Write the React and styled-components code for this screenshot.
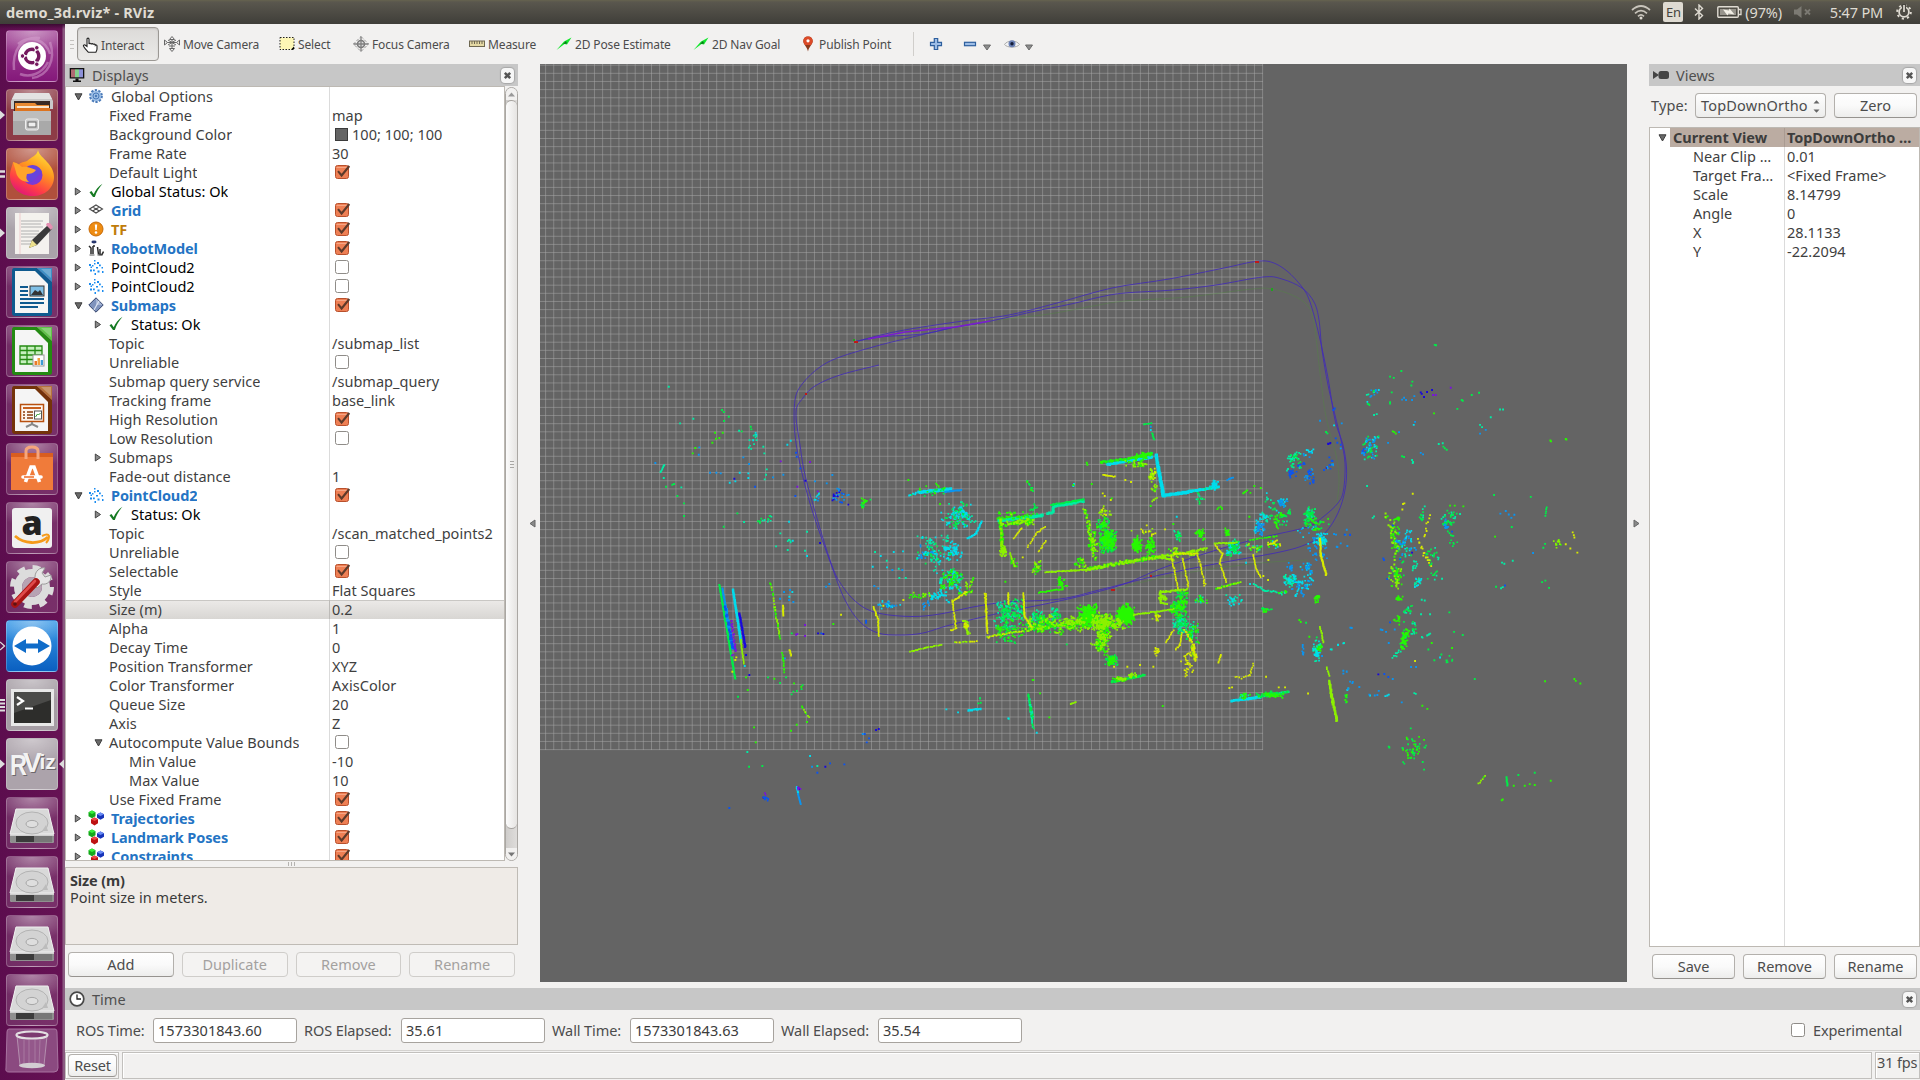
import React from "react";
import styled, { createGlobalStyle, css } from "styled-components";

const Global = createGlobalStyle`
  * { box-sizing: border-box; }
  body { margin: 0; overflow: hidden; background: #f2f1f0; }
  body, button, input { font-family: "Noto Sans", "Open Sans", sans-serif; font-size: 14.5px; letter-spacing: 0.03px; color: #4c4c4c; }
`;

/* ---------- frame ---------- */
const Desktop = styled.div`
  width: 1920px; height: 1080px; display: flex; flex-direction: column; overflow: hidden;
  white-space: nowrap; line-height: 19px;
`;
const TopBar = styled.header`
  height: 24px; flex: none; display: flex; align-items: center; justify-content: space-between;
  padding: 0 8px 0 6px; color: #dfdbd2;
  background: linear-gradient(#66634f 0, #5a574e 2px, #3f3e39 100%);
`;
const WindowTitle = styled.span` font-weight: 700; font-size: 14.5px; letter-spacing: 0.15px; `;
const Indicators = styled.div` display: flex; align-items: center; font-size: 14.5px; letter-spacing: -0.18px; `;
const Gap = styled.span` width: ${p => p.$w}px; flex: none; `;
const Lang = styled.span`
  width: 20px; height: 20px; border-radius: 2px; background: #dfdbd2; color: #45433e;
  font-size: 13px; line-height: 20px; text-align: center;
`;
const Body = styled.div` flex: 1; min-height: 0; display: flex; `;
const Launcher = styled.nav`
  width: 65px; flex: none; display: flex; flex-direction: column; gap: 7px; padding: 6px 0 0 6px;
  background: linear-gradient(#3c0a33 0, rgba(60,10,51,0) 5px), linear-gradient(90deg, #5c0d4e 0, #661254 62px, #8a5a80 63px, #8a5a80 65px);
`;
const Slot = styled.div` position: relative; width: 52px; height: 52px; flex: none; `;
const Tile = styled.div`
  width: 52px; height: 52px; border-radius: 4px; border: 1px solid rgba(255,255,255,.22);
  background: radial-gradient(ellipse 40px 24px at 50% 0, rgba(255,255,255,.42), rgba(255,255,255,0)), ${p => p.$bg || "rgba(255,255,255,.13)"};
  svg { display: block; margin: -1px; overflow: visible; }
`;
const Marker = styled.svg` position: absolute; top: 19px; ${p => (p.$right ? "left: 52px;" : "left: -6px;")} `;
const App_ = styled.main` flex: 1; min-width: 0; display: flex; flex-direction: column; background: #f2f1f0; `;

/* ---------- tool bar ---------- */
const ToolBar = styled.div` height: 40px; flex: none; display: flex; align-items: center; padding-left: 5px; font-size: 12px; letter-spacing: -0.13px; `;
const Grip = styled.span`
  width: 4px; height: 9px; margin: 0 3px 0 0; background: repeating-linear-gradient(#c4c2bf 0 1px, transparent 1px 4px);
`;
const Tool = styled.div`
  height: 34px; width: ${p => p.$w}px; display: flex; align-items: center; gap: 3px; padding-left: 4px; flex: none;
  border: 1px solid transparent; border-radius: 4px;
  ${p => p.$on && css` background: linear-gradient(#dcdad8, #ebeae8); border-color: #9b9894; box-shadow: inset 0 1px 2px rgba(0,0,0,.12); padding-top: 2px; `}
  svg { flex: none; }
`;
const ToolSep = styled.span` width: 1px; height: 24px; background: #d0cecb; margin-right: 14px; `;

/* ---------- panels ---------- */
const Work = styled.div` height: 918px; flex: none; display: flex; `;
const Left = styled.section` width: 453px; flex: none; display: flex; flex-direction: column; `;
const Right = styled.section` width: 271px; flex: none; display: flex; flex-direction: column; `;
const PanelTitle = styled.div`
  height: 22px; flex: none; display: flex; align-items: center; gap: 7px; padding: 0 4px 0 4px; background: #c7c7c7; color: #4f4f4f;
  span { flex: 1; }
`;
const CloseBox = styled.i`
  width: 13px; height: 15px; border-radius: 4px; background: #f7f7f7; box-shadow: 0 0 1px 1px rgba(120,120,120,.4);
  display: flex; align-items: center; justify-content: center;
`;
const TreeWrap = styled.div` height: 775px; flex: none; display: flex; `;
const Tree = styled.div`
  flex: 1; min-width: 0; overflow: hidden; border: 1px solid #bdb9b3; color: #3f3f3f;
  background: linear-gradient(90deg, transparent ${p => p.$col}px, #dbdbdb ${p => p.$col}px, #dbdbdb ${p => p.$col + 1}px, transparent ${p => p.$col + 1}px) #fff;
`;
const RowBox = styled.div`
  height: 19px; display: grid; grid-template-columns: ${p => p.$col}px 1fr;
  ${p => p.$sel && css` background: linear-gradient(#c9c7c4 0 1px, #ebe9e7 1px, #d8d6d3); `}
`;
const NameCell = styled.div`
  display: flex; align-items: center; min-width: 0; padding-left: ${p => 2 + p.$level * 20}px; overflow: hidden;
  color: ${p => p.$color || "inherit"}; font-weight: ${p => (p.$bold ? 700 : 400)};
  letter-spacing: ${p => (p.$bold ? "-0.12px" : "inherit")};
`;
const Fold = styled.span` width: 20px; flex: none; display: flex; justify-content: center; align-items: center; `;
const RowIcon = styled.span` width: 16px; height: 16px; flex: none; margin: -1px 6px 0 0; svg { display: block; } `;
const RowText = styled.span` padding-left: 1px; line-height: 19px; overflow: hidden; text-overflow: ellipsis; `;
const ValueCell = styled.div`
  border-left: 1px solid ${p => (p.$sel ? "#bdbbb8" : "#dbdbdb")}; padding-left: 2px; display: flex; align-items: center; overflow: hidden;
  svg { margin-top: -1px; }
`;
const Swatch = styled.i` width: 13px; height: 13px; background: #646464; border: 1px solid #3b3b3b; margin: 0 4px 1px 3px; `;
const Scroll = styled.div`
  width: 13px; margin-top: 1px; border: 1px solid #aaa7a3; border-radius: 7px; background: linear-gradient(90deg, #cfcdcb, #dedcda);
  display: flex; flex-direction: column; overflow: hidden;
`;
const ScrollEnd = styled.div` height: 12px; flex: none; display: flex; align-items: center; justify-content: center; background: #f2f1f0; `;
const Thumb = styled.div`
  height: 729px; flex: none; border: 1px solid #a5a29e; border-width: 1px 0; border-radius: 7px; background: linear-gradient(90deg, #fbfbfb, #e6e4e2);
  display: flex; align-items: center; justify-content: center;
`;
const Bars = styled.i`
  ${p => p.$v
    ? css` width: 7px; height: 4px; background: repeating-linear-gradient(90deg, #b5b3b0 0 1px, transparent 1px 3px); `
    : css` width: 4px; height: 8px; background: repeating-linear-gradient(#a9a7a4 0 1px, transparent 1px 3px); `}
`;
const Splitter = styled.div` height: 6px; flex: none; display: flex; justify-content: center; align-items: center; `;
const Help = styled.div`
  height: 78px; flex: none; border: 1px solid #bfbbb5; background: #efebe7; color: #3a3a3a; padding: 4px 4px; line-height: 17px;
  b { display: block; letter-spacing: -0.15px; }
`;
const Buttons = styled.div` display: flex; gap: 8px; padding: ${p => p.$pad}; `;
const Btn = styled.button`
  flex: 1; height: 25px; padding: 0; border-radius: 4px; border: 1px solid #b3b0ac; border-bottom-color: #96938f;
  background: linear-gradient(#fefefe, #fafafa 50%, #ededec); line-height: 21px; letter-spacing: 0;
  ${p => p.$off && css` color: #a3a19f; border-color: #cfcdca; background: #f4f3f2; `}
  ${p => p.$flat && css` flex: none; width: 49px; height: 23px; letter-spacing: -0.2px; `}
`;
const Handle = styled.div` width: ${p => p.$w}px; flex: none; display: flex; align-items: center; padding-left: ${p => p.$l}px; `;
const View = styled.div` width: 1087px; flex: none; background: #646464; svg { display: block; } `;
const TypeRow = styled.div` height: 41px; flex: none; display: flex; align-items: flex-start; padding: 7px 3px 0 2px; line-height: 25px; `;
const TypeLabel = styled.span` width: 37px; letter-spacing: 0.15px; `;
const Select = styled.div`
  width: 131px; height: 25px; margin: 0 8px 0 7px; border-radius: 4px; border: 1px solid #b3b0ac; border-bottom-color: #96938f;
  background: linear-gradient(#fefefe, #ededec); display: flex; justify-content: space-between; align-items: center; padding: 0 5px 0 5px; line-height: 23px;
  letter-spacing: 0.2px;
`;
const ViewTree = styled(Tree)` flex: none; height: 820px; `;
const CurrentRow = styled.div`
  height: 19px; display: grid; grid-template-columns: 20px 114px 1fr; font-weight: 700; letter-spacing: 0; color: #3c3c3c;
  > * { background: #bbaca2; padding-left: 3px; overflow: hidden; }
  > *:first-child { background: none; display: flex; align-items: center; padding-left: 8px; }
  > *:last-child { border-left: 1px solid #a99b92; padding-left: 2px; letter-spacing: -0.1px; }
`;

/* ---------- bottom ---------- */
const TimeTitle = styled(PanelTitle)` margin-top: 6px; `;
const TimeRow = styled.div` height: 40px; flex: none; display: flex; align-items: center; padding: 0 16px 0 11px; `;
const Label = styled.span` width: ${p => p.$w}px; letter-spacing: -0.1px; padding-top: 1px; `;
const Field = styled.input` width: 144px; height: 25px; margin-right: 7px; padding: 0 4px 1px; border: 1px solid #a7a39e; border-radius: 3px; background: #fff; outline: none; color: #3c3c3c; `;
const Push = styled.span` flex: 1; `;
const Status = styled.footer` height: 30px; flex: none; display: flex; border-top: 1px solid #d4d2cf; padding: 1px 0 0 0; gap: 3px; `;
const Cell = styled.div`
  height: 27px; width: ${p => p.$w || "auto"}; flex: ${p => (p.$w ? "none" : 1)}; border: 1px solid #c2c0bd; box-shadow: inset 1px 1px 0 #fff;
  display: flex; align-items: ${p => (p.$top ? "flex-start" : "center")}; padding-left: ${p => p.$pl || 0}px; letter-spacing: -0.15px;
`;

/* ---------- small glyphs ---------- */
const Check = ({ on }) => (
  <svg width="19" height="16" viewBox="0 0 19 16">
    <rect x="3.5" y="1.5" width="13" height="13" rx="2" fill={on ? "#ee7f54" : "#fff"} stroke={on ? "#b8502c" : "#8f8c88"} />
    {on && <path d="M4.5 3.5h11" stroke="#f6a685" />}
    {on && <path d="M6 7.2l3.6 4.3L17.3 2" fill="none" stroke="#5e3a2a" strokeWidth="2.1" />}
  </svg>
);
const Down = () => <svg width="9" height="8"><path d="M1 .8h7L4.5 7z" fill="#6a6a6a" stroke="#3d3d3d" /></svg>;
const Tri = () => <svg width="8" height="9"><path d="M1.3 1v7L6.5 4.5z" fill="#8a8a8a" stroke="#454545" /></svg>;
const Close = () => <CloseBox><svg width="9" height="9"><path d="M1.8 1.800l5.400 5.400M7.200 1.800l-5.400 5.400" stroke="#555" strokeWidth="2.500" /></svg></CloseBox>;
const Caret = ({ up, c = "#777" }) => <svg width="7" height="5"><path d={up ? "M0 4.5h7L3.5.5z" : "M0 .5h7L3.5 4.5z"} fill={c} /></svg>;
const CaretSlot = styled.span` display: flex; padding-top: 7px; `;
const MenuCaret = () => <CaretSlot><svg width="8" height="7"><path d="M.5 1h7L4 6z" fill="#8c8c8c" stroke="#6a6a6a" /></svg></CaretSlot>;

const ICONS = {
  gear: <><circle cx="8" cy="8" r="5.6" fill="#a9c6e8" stroke="#4a7ab8" strokeWidth="2.6" strokeDasharray="2.2 1.3" /><circle cx="8" cy="8" r="5" fill="#9dbfe6" /><circle cx="8" cy="8" r="3" fill="none" stroke="#4a7ab8" /><circle cx="8" cy="8" r="1.2" fill="#4a7ab8" /></>,
  ok: <path d="M1.500 9.200l2-1.200 2.200 3.200C7.500 7 10 3.600 14.500.8 10.800 5 8.600 9 6.800 14H5z" fill="#157a22" />,
  grid: <path d="M8 3l6.500 4L8 11 1.500 7zM4.700 5l6.600 4M11.300 5L4.700 9" fill="none" stroke="#4a4a4a" strokeWidth="1.100" />,
  warn: <><circle cx="8" cy="8" r="7" fill="#ee8c12" stroke="#c76a06" /><path d="M6.800 3.500h2.400l-.5 5.500H7.300z" fill="#fff" /><circle cx="8" cy="11.500" r="1.300" fill="#fff" /></>,
  robot: <><ellipse cx="6" cy="2" rx="2.600" ry="1.400" fill="#27376e" /><path d="M1 6l2 2v6M5 6v8M5 6h2M9.500 7l1 7.500M12 9v5.500h2l1.500-3" fill="none" stroke="#2a2a2a" strokeWidth="1.500" /><path d="M1.500 15h5M9.500 15h5" stroke="#555" /></>,
  cloud: <path d="M6 1h1.500v1.500H6zM9 3h2v2H9zM1 5h2v2H1zM4 6h1.500v1.500H4zM11 5.500h1.800v1.800H11zM13.500 8H15v1.500h-1.500zM8 8h2v1.500H8zM2 10.500h2v2H2zM5 10.500h1.800v1.800H5zM9.500 11.500h2v2h-2zM14 12h1.500v2H14zM6.500 14H8v2H6.500zM2.500 7.500H4V9H2.500zM6 4h1.500v1.500H6z" fill="#1a8cf0" />,
  diamond: <><path d="M8 .8L15.200 8 8 15.200.8 8z" fill="#7f93bd" stroke="#33436b" /><path d="M8 1.500L14.500 8H8z" fill="#a5b4d4" /><path d="M6 13l5-9" stroke="#dbe2f0" strokeWidth="1.200" /></>,
  cubes: <><path d="M4 .5l3.500 1.800v4L4 8.200.5 6.300v-4z" fill="#14a81a" /><path d="M4 .5l3.500 1.800L4 4 .5 2.300z" fill="#35ee3c" /><path d="M12.500 2.500L16 4.200v3.600l-3.500 1.900L9 7.800V4.200z" fill="#1733b8" /><path d="M12.500 2.500L16 4.200 12.500 6 9 4.200z" fill="#6a8cf5" /><path d="M6.500 7.500L10 9.200v4L6.500 15.500 3 13.200v-4z" fill="#bd1212" /><path d="M6.500 7.500L10 9.200l-3.500 1.800L3 9.200z" fill="#f04848" /></>,
  hand: <path d="M5 9.500V2.300c0-1.600 2-1.600 2 0V7c.3-1 2-1 2.200.3.300-1 2-.9 2.100.4.300-.9 1.900-.8 2 .5.400-.6 1.700-.4 1.700.8v3c0 1.800-1 2.500-1.200 3.300H6.500C5.500 14 3 12 1.500 9.300 1 8 2.500 7.300 3.400 8.300z" fill="#fff" stroke="#222" strokeWidth="1.100" />,
  move: <path d="M8 .5l2.500 3h-5zM8 15.500l2.500-3h-5zM.5 4v5l3-2.500zM15.500 4v5l-3-2.500zM8 3.500v9M3.500 6.500h9M4 4l8 5M12 4L4 9M5 10h6" fill="none" stroke="#666" />,
  select: <><rect x="1" y="1.500" width="14" height="12" fill="#fdf6b5" stroke="#222" strokeDasharray="1.500 1.500" /><path d="M12 13.500l3-3v3z" fill="#000" /></>,
  focus: <><path d="M8 .5L15.500 8 8 15.500.5 8z" fill="none" stroke="#999" strokeDasharray="3 1.500" /><circle cx="8" cy="8" r="3.500" fill="#ddd" stroke="#777" strokeWidth="1.500" /><path d="M8 .5v15M.5 8h15" stroke="#808080" strokeWidth="1.300" /></>,
  ruler: <><rect x=".5" y="5" width="15" height="5.500" fill="#e5d9a4" stroke="#6e6750" /><path d="M3 5v3M5.500 5v3M8 5v3M10.500 5v3M13 5v3" stroke="#6e6750" /></>,
  arrow: <><path d="M.5 14L8 5.500 15.500 1.500 11 8.500 8.500 8z" fill="#12e62c" /><path d="M7 8l3-3 1 2.500z" fill="#0a7016" /></>,
  pin: <><path d="M8 .5c-2.900 0-4.700 2.100-4.700 4.600C3.300 8.500 7 11 8 15.500c1-4.500 4.700-7 4.700-10.400C12.700 2.600 10.900.5 8 .5z" fill="#8c3a1c" /><path d="M8 .5c-2.900 0-4.700 2.100-4.700 4.600 0 1.400.8 2.700 1.700 4h6c.9-1.300 1.700-2.600 1.700-4C12.700 2.600 10.900.5 8 .5z" fill="#dc4a28" /><circle cx="8" cy="4.800" r="1.600" fill="#fff" /></>,
  plus: <path d="M6.300 2.500h3.400v3.800h3.800v3.400H9.700v3.800H6.300V9.700H2.500V6.300h3.800z" fill="#9dbde6" stroke="#2d5f9e" strokeWidth="1.200" />,
  minus: <rect x="2.500" y="6.300" width="11" height="3.400" fill="#9dbde6" stroke="#2d5f9e" strokeWidth="1.200" />,
  eye: <><path d="M.5 8.500C3 4 13 4 15.500 8.500 13 12 3 12 .5 8.500z" fill="#f3f3f3" stroke="#aaa" /><circle cx="8" cy="7.800" r="3.500" fill="#6a80b5" /><circle cx="8" cy="7.800" r="1.700" fill="#141c38" /></>,
  monitor: <><rect x=".7" y="1" width="14.600" height="10.500" fill="#111" /><path d="M2 2.300h4v8H2z" fill="#b06a72" /><path d="M6 2.300h4v8H6z" fill="#86cf8e" /><path d="M10 2.300h4v8h-4z" fill="#8c90d8" /><path d="M6.500 11.500h3v2h2.500V15H4v-1.500h2.500z" fill="#111" /></>,
  camera: <><rect x="5.500" y="4" width="10.500" height="8" rx="2.500" fill="#444" /><path d="M0 4l6 4-6 4z" fill="#444" /></>,
  clock: <><circle cx="8" cy="8" r="6.800" fill="#fff" stroke="#484848" strokeWidth="1.700" /><path d="M8 3.500V8h4" fill="none" stroke="#222" strokeWidth="1.300" /></>,
};
const Icon = ({ n, s = 16 }) => <svg width={s} height={s} viewBox="0 0 16 16">{ICONS[n]}</svg>;

/* ---------- launcher art, 52 x 52 ---------- */
const Doc = ({ c, c2, children }) => (
  <>
    <path d="M8 2h23l15 14v31q0 3-3 3H9q-3 0-3-3V5q0-3 2-3z" fill={c} />
    <path d="M31 2h15v14z" fill={c2} /><path d="M35 3h10v9z" fill="#fff" opacity=".25" />
    <path d="M9 5h20l13 13v29H9z" fill="#f5f5f5" />
    {children}
  </>
);
const Disk = () => (
  <>
    <path d="M10 12h32l6 26v6q0 2-2 2H6q-2 0-2-2v-6z" fill="#cfcfcf" />
    <path d="M10 12h32l6 25H4z" fill="#d9d9d9" stroke="#efefef" />
    <ellipse cx="26" cy="26" rx="16" ry="11" fill="#d3d3d3" stroke="#b3b3b3" />
    <ellipse cx="26" cy="27" rx="6" ry="3.600" fill="#dedede" stroke="#a6a6a6" />
    <path d="M36 34l4-6 2 6z" fill="#bcbcbc" />
    <path d="M4 39h44v5q0 2-2 2H6q-2 0-2-2z" fill="#8f8f8f" /><path d="M10 39h32v6H10z" fill="#3b3b3b" /><path d="M28 39h18v6H28z" fill="#777" />
  </>
);
const APPS = [
  { k: "dash", bg: "linear-gradient(#a64d9b, #84187a)", art: <>
    <path d="M8 40C6 20 16 6 34 8M44 12c6 18-2 34-18 36M12 14c12-10 28-4 32 10M14 44c10 4 22 0 28-12" fill="none" stroke="#d7a4d2" strokeWidth="2.500" opacity=".5" />
    <circle cx="26" cy="26" r="14" fill="#fff" /><circle cx="26" cy="26" r="6.800" fill="none" stroke="#75195f" strokeWidth="3.400" strokeDasharray="12.600 1.640" strokeDashoffset="-8" />
    <circle cx="16.500" cy="26" r="2.300" fill="#75195f" stroke="#fff" /><circle cx="30.800" cy="17.800" r="2.300" fill="#75195f" stroke="#fff" /><circle cx="30.800" cy="34.200" r="2.300" fill="#75195f" stroke="#fff" /></> },
  { k: "files", bg: "#8d3c47", m: 1, art: <>
    <path d="M9 4h34l4 8v8H5v-8z" fill="#c9c9c9" /><path d="M9 4h34l3 6H6z" fill="#e3e3e3" /><path d="M8 12h36v10H8z" fill="#3a2a24" />
    <path d="M9 14h20l2 2h12v8H9z" fill="#e98a32" /><path d="M11 17h32v3H11z" fill="#fbe6cd" /><path d="M9 19h35v6H9z" fill="#dd7420" />
    <path d="M7 22h38v24H7z" fill="#a9a9a9" /><path d="M7 22h38v10H7z" fill="#bdbdbd" /><rect x="19.500" y="30" width="13" height="11" rx="2" fill="#c9c9c9" stroke="#eee" /><rect x="22" y="33" width="8" height="5" fill="#eee" stroke="#666" /></> },
  { k: "firefox", bg: "#b0503c", m: 2, art: <>
    <defs><linearGradient id="ff" x1=".8" y1="0" x2=".3" y2="1"><stop offset="0" stopColor="#ffe93e" /><stop offset=".4" stopColor="#ff9a1f" /><stop offset=".75" stopColor="#ff3f45" /><stop offset="1" stopColor="#e0157a" /></linearGradient></defs>
    <path d="M32 2c1 5 6 8 9 12 4 4 7 9 7 15 0 11-9 19-21.500 19S4 39 4 28c0-6 2-9 3-14l5 3c3-3 6-3 9-4 4-4 10-5 11-11z" fill="url(#ff)" />
    <circle cx="26.500" cy="27" r="10" fill="#7a3ad6" /><path d="M20 20c5-5 14-2 16 4l-10 10c-7-1-10-7-6-14z" fill="#5a4be0" opacity=".6" />
    <path d="M7 14c5 1 8 4 9 5 4-1 9 1 14 3-2 3-6 4-9 4-1 4-1 5 2 8-7 0-12-4-13-10z" fill="#ffa42a" /></> },
  { k: "gedit", bg: "#aaa3aa", m: 1, art: <>
    <path d="M9 6h34v41H9z" fill="#f4f2ee" /><path d="M14 6v41" stroke="#ecc" /><path d="M15 14h22M15 17h20M15 20h22M15 24h18M15 27h20M15 30h16M15 34h12M15 37h14" stroke="#b0b0b0" />
    <path d="M42 18l4 4-15 16-8 3 3-8z" fill="#3a3a3a" /><path d="M41 16l3 0 3 4-2 3-5-5z" fill="#e58fb2" /><path d="M26 33l5 5-8 3z" fill="#ece08c" /></> },
  { k: "writer", art: <Doc c="#0f5a8f" c2="#3d8fc4"><path d="M14 21h8M14 25h8M14 29h8M14 33h24M14 37h24M14 41h18" stroke="#0f5a8f" strokeWidth="2" /><rect x="24" y="20" width="14" height="10" fill="#7fbfe6" stroke="#333" /><path d="M25 29l4-5 3 2 2-2 3 5z" fill="#333" /></Doc> },
  { k: "calc", art: <Doc c="#248a12" c2="#5fc248"><path d="M14 21h22v18H14zM14 25.500h22M14 30h22M14 34.500h22M21 21v18M29 21v18" fill="#c6efbe" stroke="#248a12" strokeWidth="1.300" /><rect x="27" y="30" width="11" height="11" fill="#fff" stroke="#999" /><path d="M28.500 36h2.500v4h-2.500z" fill="#e97a2a" /><path d="M31.500 33h2.500v7h-2.500z" fill="#f0a040" /><path d="M34.700 35h2.300v5h-2.300z" fill="#3c9ad6" /></Doc> },
  { k: "impress", art: <Doc c="#74330a" c2="#b5733c"><rect x="14.500" y="20.500" width="23" height="17" fill="#fdf6f0" stroke="#b8500f" strokeWidth="1.500" /><path d="M17 24h18" stroke="#c8601f" strokeWidth="2" /><path d="M17 28h2M21 28h6M17 31h2M21 31h6M17 34h2M21 34h6" stroke="#8a3c0d" strokeWidth="1.500" /><rect x="28.500" y="27" width="7" height="8" fill="#fff" stroke="#555" /><path d="M29.500 33l2-3 1 1 2-2" stroke="#2a9a2a" fill="none" /><path d="M26 38v3M20 43l6-3 6 3" fill="none" stroke="#888" strokeWidth="2" /></Doc> },
  { k: "software", art: <>
    <path d="M5 10h42v5H5z" fill="#d95d20" /><path d="M5 14h42v33H5z" fill="#f07b3a" /><path d="M20 16V8q0-4 6-4t6 4v8" fill="none" stroke="#f6a67c" strokeWidth="3" />
    <path d="M19.500 39l5.500-15h3l5.500 15" fill="none" stroke="#fff" strokeWidth="3.600" /><path d="M17 34h18" stroke="#fff" strokeWidth="3.600" strokeLinecap="round" /><path d="M18 34h10" stroke="#ee6a25" strokeWidth="1.500" /></> },
  { k: "amazon", art: <>
    <rect x="6" y="6" width="40" height="40" rx="3" fill="#f0f0f0" />
    <text x="26" y="33" textAnchor="middle" fontFamily="Open Sans, sans-serif" fontWeight="800" fontSize="34" fill="#222">a</text>
    <path d="M9 34c9 8 24 9 33 1" fill="none" stroke="#f59a1a" strokeWidth="2.800" /><path d="M36 34q6-3 7 0 0 4-3 7" fill="none" stroke="#f59a1a" strokeWidth="2" /></> },
  { k: "settings", art: <>
    <circle cx="26" cy="26" r="19" fill="none" stroke="#dcdcdc" strokeWidth="6" strokeDasharray="7.500 7.420" /><circle cx="26" cy="26" r="14" fill="none" stroke="#dcdcdc" strokeWidth="8" /><circle cx="26" cy="26" r="10" fill="#b7a3b3" />
    <path d="M29 16c0-6 5-10 10-9l-3 5 3 4 6-2c1 6-4 10-9 9l-5 4-4-4z" fill="#e6e6e6" stroke="#9a9a9a" /><path d="M9 43L30 21" stroke="#a81414" strokeWidth="7.500" strokeLinecap="round" /><path d="M9 41L29 20" stroke="#e04a4a" strokeWidth="2.600" strokeLinecap="round" /><circle cx="9" cy="43" r="1.800" fill="#5c1111" /></> },
  { k: "teamviewer", bg: "linear-gradient(#3a9ae8, #0a5fc0)", m: 3, art: <><circle cx="26" cy="26" r="19.500" fill="#fff" /><path d="M8 26l12-7v4.500h12V19l12 7-12 7v-4.500H20V33z" fill="#0f6cc9" /></> },
  { k: "terminal", bg: "#a59da4", m: 4, art: <><path d="M5 10h43v37H5z" fill="#e8e8e8" /><path d="M8 13h37v31H8z" fill="#2d2d2b" /><path d="M8 13h37v8L8 34z" fill="#4a4a48" /><path d="M11 18l6 4-6 4" fill="none" stroke="#fff" strokeWidth="2.200" /><path d="M19 29.500h8" stroke="#fff" strokeWidth="2" /></> },
  { k: "rviz", bg: "#aca3ab", m: 1, active: true, art: <g fontFamily="Liberation Sans, sans-serif" fontWeight="700">
    <g fill="#6d686c"><text x="5" y="38" fontSize="29" textLength="17" lengthAdjust="spacingAndGlyphs">R</text><text x="18" y="35" fontSize="28">V</text><text x="34.500" y="32" fontSize="21">iz</text></g>
    <g fill="#f3f3f3"><text x="4" y="36.500" fontSize="29" textLength="17" lengthAdjust="spacingAndGlyphs">R</text><text x="17" y="33.500" fontSize="28">V</text><text x="33.500" y="30.500" fontSize="21">iz</text></g></g> },
  { k: "disk1", art: <Disk /> }, { k: "disk2", art: <Disk /> }, { k: "disk3", art: <Disk /> }, { k: "disk4", art: <Disk /> },
];
const MARKS = {
  1: <path d="M0 2.500L5 7 0 11.500z" fill="#ddd" />,
  2: <path d="M0 4.500h5M0 9.500h5" stroke="#ddd" strokeWidth="2.500" />,
  3: <path d="M0 3l4.500 4L0 11" fill="none" stroke="#ddd" strokeWidth="1.300" />,
  4: <path d="M0 2h5M0 5.500h5M0 9h5M0 12.500h5" stroke="#ddd" strokeWidth="2" />,
};
const TrashSlot = styled.div` margin: -5px 0 0 -1px; svg { display: block; } `;
const TrashArt = () => (
  <TrashSlot><svg width="54" height="46" viewBox="0 0 54 46">
    <path d="M4 1h46q2 0 2 3l1 36q0 4-4 4H4q-4 0-3-4L2 4q0-3 2-3z" fill="#8b4a80" stroke="#a873a0" />
    <path d="M12 7l3 30q12 4 24 0L42 7z" fill="#94588b" /><path d="M19 12v25M24 12v26M30 12v26M35 12l-1 25" stroke="#a878a0" /><path d="M12 8l3 29M42 8l-3 29" stroke="#b48fae" />
    <ellipse cx="27" cy="7" rx="15.500" ry="3.500" fill="#7c3a70" stroke="#e3dfe2" strokeWidth="2.200" /><ellipse cx="27" cy="37.500" rx="13" ry="2.800" fill="#d3cdd2" />
  </svg></TrashSlot>
);

/* ---------- 3D viewport ---------- */
const PAL = { y: "#d6ea00", Y: "#8cf000", g: "#26f800", G: "#00ec48", t: "#00eca4", c: "#00dcec", b: "#0a94f0", B: "#0a54f0", d: "#1808dc", p: "#7a12dc" };
let seed = 20191109;
const rnd = () => ((seed = (seed * 1664525 + 1013904223) >>> 0) / 4294967296);
const gauss = () => (rnd() + rnd() - 1) * 1.05;

/* Each patch holds its own origin and units per pixel; walls are poly-lines [colours, width, jitter, density, x, y, ...],
   blobs are [x, y, rx, ry, count, colours], dots are flat x y lists by colour. */
const PATCHES = [
  { o: [640, 340], s: [3, 3],
    walls: [
      ["G", 2, 1, 1.2, 238, 735, 285, 1015], ["b", 2, 1, 1, 247, 745, 262, 830], ["Bb", 2.600, 3, 1, 255, 800, 278, 925], ["p", 2, 3, .5, 275, 845, 287, 935],
      ["c", 2.400, 1, 1.2, 278, 748, 302, 905], ["d", 2.200, 1, 1, 298, 820, 315, 920], ["Y", 1.700, 1, .7, 302, 900, 312, 970],
      ["c", 3, 2, 1.2, 835, 455, 930, 446], ["b", 2, 1, 1, 915, 455, 962, 450], ["c", 2, 3, .5, 808, 468, 840, 455],
      ["gY", 1.800, 3, .35, 393, 735, 405, 800], ["gY", 1.800, 2, .6, 403, 800, 421, 895], ["g", 1.800, 2, .6, 427, 940, 433, 995], ["y", 2, 2, .8, 430, 797, 430, 825],
      ["y", 1.700, 1.500, .9, 700, 800, 715, 840, 716, 888], ["Y", 1.800, 2, .5, 810, 935, 860, 922, 905, 915], ["y", 1.600, 2, .8, 937, 780, 949, 865, 932, 872], ["y", 1.800, 2, .8, 980, 755, 937, 785],
      ["Yy", 1.800, 3, .5, 945, 908, 1010, 903], ["Y", 2, 6, .8, 972, 842, 982, 882], ["y", 1.700, 2, .8, 1037, 760, 1042, 880], ["y", 1.600, 1.500, .8, 1105, 760, 1105, 790],
      ["y", 1.600, 1.500, .8, 1150, 760, 1154, 830, 1175, 860], ["y", 1.800, 2, .8, 450, 930, 454, 947], ["c", 2, 1, 1, 470, 1340, 474, 1362], ["b", 1.800, 0, 1, 474, 1362, 482, 1392],
      ["Yg", 1.800, 3, .5, 485, 1100, 506, 1132], ["G", 1.800, 5, .3, 455, 1065, 490, 1040], ["tG", 1.800, 2, .7, 1165, 1065, 1180, 1165], ["c", 1.800, 1, .8, 985, 1110, 1022, 1106],
      ["t", 1.800, 1, .7, 62, 396, 73, 375], ["c", 2, 2, .8, 1025, 545, 1008, 580, 984, 596],
    ],
    blobs: [
      [340, 305, 14, 28, 14, "tGc"], [955, 530, 52, 44, 130, "tccG"], [880, 625, 55, 50, 95, "ttcG"], [940, 635, 28, 34, 60, "c"], [935, 720, 34, 38, 150, "cctgG"], [895, 765, 36, 16, 45, "c"],
      [850, 767, 42, 14, 22, "Yg"], [985, 742, 30, 22, 14, "gY"], [603, 470, 36, 42, 32, "Bbdb"], [532, 475, 8, 18, 9, "bc"], [675, 492, 24, 16, 20, "gG"], [745, 792, 36, 16, 30, "bc"], [378, 540, 22, 22, 16, "tG"],
      [880, 452, 75, 16, 28, "gG"], [478, 1342, 8, 8, 10, "pd"], [370, 1370, 9, 20, 11, "dBp"], [283, 935, 7, 20, 8, "pB"], [450, 605, 10, 8, 5, "t"], [860, 797, 16, 14, 12, "b"], [862, 640, 36, 30, 18, "cb"], [895, 665, 20, 35, 20, "tc"],
      [1110, 520, 40, 8, 16, "gY"],
    ],
    dots: {
      t: "86 140 120 250 160 236 370 320 373 340 380 388 378 404 374 418 71 414 124 442 297 272 312 546 421 580 408 619 443 630 495 632 501 575 705 636 740 662 776 686 778 714 797 714 1020 1075 1106 1136 532 1278 322 1236",
      G: "246 210 251 216 266 230 252 243 332 260 334 268 305 274 78 440 97 434 102 432 112 468 132 490 132 528 251 560 292 520 354 544 327 1280 367 1278 294 1070 438 1012 420 1029 384 1012 455 880",
      g: "217 308 225 278 238 294 248 278 228 296 166 324 158 340 390 730 1180 1020 1162 426 1174 450 1000 714 998 720 1096 725 580 852 318 1012 323 1050 342 1162 347 1207 453 1172 470 1154 501 1146 403 1016 462 1030 484 1040 805 420 900 492",
      b: "178 322 176 344 210 398 229 398 242 400 46 369 310 352 327 372 399 412 430 404 525 424 577 405 560 430 558 740 568 732 787 690 757 690 420 776 432 756 450 750 447 780 460 786 435 955 703 738 715 745 668 1182 516 1280",
      c: "442 314 452 302 299 398 325 400 325 414 269 428 286 424 447 545 458 602 501 648 722 648 741 682 761 636 698 680 789 634 457 756 448 770 510 1248 919 1108 954 1117 1190 1178 314 978",
      B: "468 338 470 350 481 385 345 440 466 468 544 880 678 842 678 848 570 1270 613 1273 532 1298 687 1195 680 1207 268 1404 674 1182",
      d: "283 416 496 422 540 609 328 1005 534 880 550 882 708 1170 716 1167 556 1280 318 945",
      p: "422 364 510 366 472 440 533 454 495 855 495 888 468 884 472 882",
      y: "603 824 790 780 730 797 277 995 289 952 286 960",
    } },
  { o: [960, 400], s: [3, 3],
    walls: [
      ["t", 3, 2, 1.400, 115, 360, 245, 345], ["t", 2.600, 3, 1.300, 260, 340, 278, 336, 280, 318, 368, 302], ["G", 1.800, 2, 1, 275, 315, 372, 298], ["g", 1.800, 5, .7, 112, 356, 220, 345],
      ["Yg", 2.200, 5, 1.400, 120, 352, 128, 465], ["Yg", 2, 5, 1, 130, 375, 220, 358], ["y", 1.600, 1, .8, 185, 385, 162, 415], ["y", 1.600, 3, .7, 255, 380, 228, 402, 205, 440], ["y", 1.600, 3, .6, 260, 420, 238, 455],
      ["Yg", 1.800, 7, 1.200, 375, 325, 405, 480], ["Y", 1.700, 2, 1.100, 255, 517, 385, 509], ["Yg", 2, 6, 2.200, 380, 508, 430, 498, 590, 470], ["Y", 1.800, 4, 1.300, 590, 470, 640, 465, 740, 445],
      ["c", 3, 2, 1.500, 586, 162, 608, 285, 690, 273], ["tc", 2.500, 2, 1.300, 690, 273, 775, 260], ["c", 2.500, 3, 1.300, 440, 192, 575, 170], ["gG", 2, 3, 1.200, 420, 187, 530, 172, 575, 158], ["y", 1.800, 1, .8, 430, 225, 464, 230], ["G", 1.800, 1, .6, 552, 73, 574, 70], ["G", 1.800, 1, .8, 577, 100, 582, 118],
      ["b", 1.800, 2, .7, 802, 240, 820, 232], ["Y", 2, 2, 1, 590, 470, 640, 480], ["y", 1.600, 2, .8, 635, 470, 654, 566], ["y", 1.600, 2, .7, 668, 475, 686, 562], ["y", 1.600, 3, .8, 640, 462, 712, 462, 722, 495, 735, 558],
      ["y", 1.600, 2, .8, 765, 435, 787, 462, 780, 490, 800, 548], ["Yg", 1.800, 2, .9, 768, 566, 842, 546], ["Y", 1.800, 2, .8, 765, 430, 830, 428], ["y", 1.600, 1, .9, 880, 465, 888, 505, 902, 532], ["g", 1.800, 2, .5, 870, 420, 950, 408],
      ["t", 1.800, 2, .6, 882, 552, 912, 572, 950, 575], ["y", 2.100, 1.500, .9, 1080, 415, 1082, 465, 1098, 524], ["y", 1.600, 2, .7, 75, 580, 82, 690], ["y", 1.600, 1.500, .7, 145, 580, 145, 612], ["y", 1.600, 1.500, .8, 190, 580, 194, 650, 215, 682],
      ["yY", 1.700, 3, .8, 80, 712, 190, 692], ["Yg", 1.900, 6, 1.300, 190, 690, 350, 668], ["Y", 1.700, 2, 1, 520, 645, 640, 628], ["Y", 1.900, 3, 1.100, 597, 577, 682, 568], ["Y", 1.900, 3, 1.100, 600, 575, 602, 608, 618, 612],
      ["y", 1.600, 2, .7, 640, 692, 618, 727], ["y", 1.600, 2, .7, 667, 700, 660, 735, 647, 750], ["y", 1.800, 5, .9, 675, 690, 702, 740, 706, 782], ["y", 1.600, 2, .7, 690, 758, 673, 770, 690, 795], ["y", 1.800, 1, .8, 783, 765, 775, 788],
      ["y", 1.600, 2, .5, 880, 792, 870, 825, 845, 835, 825, 830], ["G", 2.200, 2, 1.200, 455, 845, 552, 825], ["g", 1.800, 2, .7, 235, 577, 308, 567], ["g", 2, 4, 1, 300, 537, 308, 567], ["c", 2.500, 2, 1.200, 813, 902, 900, 890], ["tG", 2.200, 3, 1.100, 890, 890, 985, 875],
      ["Y", 1.800, 2, .7, 1080, 680, 1090, 728], ["Y", 1.800, 2, .6, 1100, 802, 1107, 828], ["Y", 2.200, 2, .9, 1107, 845, 1116, 900, 1131, 960], ["tG", 1.800, 2, .6, 205, 885, 220, 955], ["c", 1.800, 2, .5, 25, 932, 62, 928], ["Y", 1.800, 1, .7, 332, 912, 348, 906],
      ["G", 1.800, 3, .5, 202, 245, 220, 272], ["Y", 1.800, 2, .6, 150, 460, 165, 500],
    ],
    blobs: [
      [185, 368, 42, 14, 50, "Yg"], [130, 450, 12, 22, 26, "Y"], [160, 490, 12, 16, 12, "g"], [225, 325, 10, 20, 12, "G"], [435, 340, 20, 22, 20, "yY"], [432, 378, 24, 26, 70, "gG"], [443, 425, 26, 36, 300, "gG"], [398, 430, 16, 34, 50, "gY"],
      [365, 490, 20, 16, 30, "gY"], [230, 502, 14, 20, 36, "Yg"], [530, 438, 16, 22, 120, "g"], [572, 440, 16, 22, 80, "g"], [652, 405, 12, 15, 34, "tG"], [720, 405, 16, 13, 44, "g"], [802, 396, 10, 13, 24, "g"], [555, 395, 40, 20, 14, "yY"],
      [525, 192, 42, 14, 45, "Yg"], [550, 168, 28, 12, 50, "g"], [575, 225, 12, 30, 40, "Yy"], [583, 270, 12, 24, 16, "Yg"], [762, 255, 14, 18, 30, "c"], [722, 292, 14, 18, 14, "tG"], [778, 322, 10, 8, 6, "g"], [860, 275, 14, 10, 8, "g"],
      [818, 445, 26, 22, 120, "tccG"], [885, 445, 28, 12, 28, "Ygt"], [943, 433, 22, 12, 36, "cgy"], [965, 577, 24, 7, 14, "tg"], [990, 540, 20, 24, 66, "ct"], [1025, 562, 36, 30, 50, "cb"], [1045, 505, 12, 22, 22, "cb"], [995, 500, 14, 16, 14, "b"],
      [1080, 420, 24, 24, 64, "tcc"], [1072, 460, 36, 30, 26, "b"], [1050, 345, 18, 25, 75, "tG"], [1070, 375, 40, 20, 44, "Gg"], [955, 362, 26, 24, 44, "gG"], [897, 380, 18, 22, 50, "cb"], [965, 308, 20, 20, 38, "bc"], [915, 350, 18, 12, 26, "tc"], [945, 325, 60, 46, 34, "tcG"],
      [1003, 182, 24, 28, 48, "Gt"], [1000, 222, 16, 18, 18, "B"], [1048, 228, 14, 25, 30, "Bb"], [1048, 160, 16, 12, 12, "cb"], [1022, 198, 16, 16, 10, "cB"], [1110, 195, 16, 20, 10, "Bb"],
      [150, 640, 50, 46, 190, "tG"], [150, 690, 62, 40, 90, "Gg"], [255, 672, 60, 30, 210, "GgY"], [235, 648, 18, 15, 44, "tG"], [290, 640, 14, 20, 34, "tG"], [340, 672, 48, 20, 150, "gY"], [385, 648, 28, 34, 380, "g"], [430, 665, 34, 28, 240, "gY"],
      [497, 645, 28, 28, 330, "g"], [470, 670, 42, 18, 110, "gY"], [430, 715, 22, 50, 200, "gY"], [458, 782, 22, 20, 90, "gG"], [408, 740, 16, 16, 26, "gY"], [610, 592, 18, 14, 28, "Y"], [590, 648, 14, 14, 22, "yY"],
      [665, 590, 24, 26, 60, "gG"], [657, 625, 26, 24, 110, "gG"], [665, 672, 24, 32, 100, "tG"], [700, 700, 20, 36, 54, "gtG"], [700, 752, 10, 30, 30, "yY"], [680, 800, 30, 18, 20, "y"], [590, 755, 9, 14, 16, "y"],
      [722, 598, 20, 14, 26, "gt"], [820, 600, 28, 20, 28, "tc"], [920, 630, 16, 10, 20, "Gg"], [1070, 598, 10, 14, 20, "g"], [480, 838, 28, 7, 50, "gY"], [515, 825, 12, 8, 22, "Y"], [303, 550, 14, 18, 30, "g"],
      [930, 885, 52, 9, 80, "gG"], [860, 886, 20, 8, 24, "tg"], [1070, 752, 13, 36, 76, "ctt"], [1078, 742, 10, 14, 16, "g"], [1030, 745, 9, 16, 8, "b"], [10, 345, 14, 30, 16, "c"], [25, 575, 28, 18, 12, "Yg"], [18, 680, 8, 22, 26, "Yy"],
      [640, 455, 22, 18, 30, "Yg"], [695, 462, 20, 8, 16, "Y"],
    ],
    dots: {
      g: "380 188 382 194 395 252 340 255 455 295 883 258 902 264 868 350 640 372 1018 660 1022 666 218 840 1048 710 1160 905 1160 885 1158 890 1156 900 268 952 240 880 572 318 608 918",
      y: "428 280 434 288 496 240 513 246 452 300 560 376 615 388 586 400 925 480 910 528 924 540 808 864 816 862 918 830 1044 880 956 862 975 862 540 795 502 800 462 800 580 800 430 325 438 345 188 472",
      c: "650 350 342 252 340 258 572 90 1040 150 1060 148 1122 76 1134 734 1112 748 1150 730 145 955 870 552 858 488",
      b: "1080 62 1145 70 1142 145 1130 440 1142 430 1162 438 1156 404 1122 402 1172 683 1086 768 1160 815 1178 846 1164 866 1150 812 1028 735 572 80",
      B: "1120 30 1127 115 1132 128 1142 134 1115 182 1108 172 1170 405 1092 210",
      d: "1110 130 1100 203 1105 132",
      G: "1098 96 1102 100 60 895 55 910 62 908 205 884 320 733 1038 668 1070 712",
    } },
  { o: [1300, 240], s: [3, 2.6133],
    walls: [
      ["Y", 2.200, 2, .9, 88, 1152, 98, 1205, 110, 1255], ["Yg", 2, 10, .5, 257, 715, 275, 770, 288, 840], ["y", 1.800, 7, .5, 352, 785, 372, 815, 390, 850], ["y", 1.800, 5, .35, 387, 720, 378, 778], ["c", 1.800, 3, .5, 365, 885, 345, 908],
      ["G", 2, 1, .8, 619, 1404, 622, 1425], ["Yg", 1.800, 2, .6, 556, 1402, 536, 1420], ["y", 1.800, 2, .5, 818, 765, 824, 776], ["G", 1.800, 2, .5, 741, 698, 736, 722],
    ],
    blobs: [
      [215, 545, 32, 36, 70, "ctbG"], [192, 552, 8, 14, 10, "Bb"], [215, 410, 28, 26, 20, "tcbG"], [285, 770, 20, 44, 48, "Ygg"], [315, 790, 32, 38, 46, "cb"], [290, 880, 26, 34, 64, "gGY"], [312, 815, 26, 34, 20, "Gt"],
      [400, 830, 26, 26, 20, "tG"], [355, 895, 14, 20, 14, "ct"], [345, 850, 10, 16, 12, "t"], [450, 735, 26, 34, 48, "tG"], [435, 748, 14, 22, 12, "b"], [458, 785, 16, 18, 10, "G"], [367, 715, 10, 18, 12, "Gt"], [402, 870, 24, 26, 12, "tG"],
      [298, 940, 22, 8, 14, "g"], [320, 968, 16, 14, 18, "tG"], [290, 990, 12, 20, 14, "g"], [315, 1035, 14, 36, 76, "gG"], [340, 1015, 14, 30, 18, "tG"], [378, 1033, 14, 8, 8, "t"], [290, 1085, 14, 12, 10, "t"], [450, 1095, 12, 22, 8, "G"],
      [335, 1330, 38, 40, 40, "gG"], [352, 1320, 22, 24, 12, "Gg"], [775, 798, 14, 18, 12, "gY"], [20, 775, 40, 40, 20, "cb"], [22, 870, 24, 30, 20, "cb"],
    ],
    dots: {
      G: "404 274 408 275 304 342 270 357 281 360 337 370 334 380 275 398 270 424 270 427 515 405 537 399 472 441 485 418 488 420 306 565 312 567 430 540 440 548 434 544 582 666 692 671 635 750 735 794 730 804 588 906 726 894 747 909 448 973 736 890 704 1392 655 1398 524 1147 372 1384 332 1276 268 1326 266 1324 403 1098 424 1083 385 1070 488 1032 462 1024 368 1364 136 1190 138 1208 140 1195",
      g: "751 524 753 526 797 520 799 521 402 453 283 502 287 506 278 500 585 775 735 1153 823 1147 827 1152 841 1159 641 1426 674 1426 689 1422 704 1424 752 1413 605 1464 608 1462 367 1217 382 1225 395 1053 456 1066 490 696 450 694 464 694 372 1306",
      y: "338 663 309 690 307 704 313 688 797 795 811 806 832 817 345 1100 24 1185",
      t: "222 457 230 455 572 463 600 443 609 443 540 483 546 489 336 575 339 580 338 583 363 978 390 978 365 940 374 942 201 643 218 726 222 722 606 843 613 846 638 838 603 910 608 907 343 1184 347 1186 132 1053 114 1058 95 1070 374 696 480 716 426 885 416 533 428 531",
      b: "306 417 312 412 318 418 336 418 343 408 345 475 557 496 540 506 601 715 617 708 626 717 643 718 699 818 634 726 151 1013 155 1014 242 1018 247 1019 258 1024 284 1018 266 1053 333 1116 348 1116 208 1188 224 1190 232 1189 236 1178 278 1147 305 1208 150 1154 157 1158 178 1168 140 1127 130 1133 362 556 369 560 264 530 297 502 108 770 140 757 142 800 112 802",
      c: "341 483 262 1190 256 1192 266 1188 145 1172 142 1176 210 1190 420 1091 236 392",
      d: "362 398 365 402 381 397 396 392 372 410 235 1135 336 817 84 532 91 530",
      B: "253 1134 265 1142 250 832 252 836 270 999 456 762 615 903 262 886 134 770 150 770 300 834 278 746 104 440",
      p: "452 386 399 405 407 405",
    } },
];

function buildCloud() {
  const out = {};
  const put = (k, x, y, w) => {
    (out[k] = out[k] || []).push(`M${x.toFixed(1)} ${y.toFixed(1)}h${w}v${w}h-${w}z`);
  };
  const pick = s => s[Math.floor(rnd() * s.length)];
  PATCHES.forEach(({ o, s, walls, blobs, dots }) => {
    const X = x => o[0] + x / s[0] - 0.9;
    const Y = y => o[1] + y / s[1] - 0.9;
    blobs.forEach(([x, y, rx, ry, n, c]) => {
      let px = x, py = y, k = pick(c);
      for (let i = 0; i < n; i++) {
        if (i && rnd() < 0.4) {
          px += (rnd() - 0.5) * 11;
          py += (rnd() - 0.5) * 11;
        } else {
          px = x + gauss() * rx;
          py = y + gauss() * ry;
          k = pick(c);
        }
        put(k, X(px), Y(py), 1.7);
      }
    });
    walls.forEach(([c, w, j, d, ...p]) => {
      for (let i = 0; i + 3 < p.length; i += 2) {
        const [x1, y1, x2, y2] = p.slice(i, i + 4);
        const n = Math.max(2, Math.round((Math.hypot(x2 - x1, y2 - y1) / 3) * d));
        for (let q = 0; q <= n; q++) {
          const t = q / n;
          put(pick(c), X(x1 + (x2 - x1) * t + gauss() * j), Y(y1 + (y2 - y1) * t + gauss() * j), w);
        }
      }
    });
    Object.entries(dots).forEach(([k, str]) => {
      const v = str.split(" ").map(Number);
      for (let i = 0; i < v.length; i += 2) put(k, X(v[i]), Y(v[i + 1]), 1.9);
    });
  });
  return Object.entries(out).map(([k, v]) => [PAL[k], v.join("")]);
}
const CLOUD = buildCloud();

const smooth = p => {
  let d = `M${p[0]} ${p[1]}`;
  const n = p.length / 2;
  const at = i => { const k = Math.min(n - 1, Math.max(0, i)); return [p[k * 2], p[k * 2 + 1]]; };
  for (let i = 0; i < n - 1; i++) {
    const [a, b, c, e] = [at(i - 1), at(i), at(i + 1), at(i + 2)];
    d += `C${b[0] + (c[0] - a[0]) / 6} ${b[1] + (c[1] - a[1]) / 6} ${c[0] - (e[0] - b[0]) / 6} ${c[1] - (e[1] - b[1]) / 6} ${c[0]} ${c[1]}`;
  }
  return d;
};
const TRACKS = [
  [855, 341.7, 899, 331, 963, 321, 1009, 315, 1057, 303, 1112, 288, 1169, 279, 1224, 268, 1254, 261.7, 1271, 262, 1287, 271, 1302, 287, 1310, 302, 1319, 335, 1328, 378, 1335, 420, 1343, 445, 1346.500, 468, 1345, 490, 1338, 513, 1325, 533, 1307, 544, 1280, 552, 1220, 563, 1160, 575, 1103, 589, 1060, 599, 1007, 602, 973, 607, 940, 614, 912, 616.500, 880, 613.500, 860, 605, 843, 587, 830, 560, 807, 483, 800, 445, 796, 412, 803, 398, 815, 386, 840, 375, 879, 365],
  [855, 341.7, 880, 337, 922, 334, 951, 328, 991, 321, 1031, 312, 1071, 304, 1100, 297, 1125, 293, 1173, 290, 1216, 285, 1263, 277, 1282, 279, 1302, 288, 1314, 302, 1319, 320, 1322, 350, 1328, 385, 1335, 415, 1341, 440, 1345, 463, 1343.500, 490, 1338, 503, 1323, 517, 1307, 527, 1260, 538, 1210, 552, 1160, 569, 1127, 583, 1093, 593, 1050, 603, 1000, 613, 950, 625, 923, 633, 900, 635, 878, 633, 860, 622, 845, 600, 832, 567, 813, 513, 802, 473, 795, 435, 795, 400, 803, 383, 820, 367, 840, 357, 873, 347, 900, 340, 951, 328],
];
const GHOST = [
  [998, 320, 1049, 314, 1093, 306, 1125, 301, 1187, 297, 1252, 289, 1272, 289, 1292, 295, 1307, 305, 1314, 322, 1320, 373, 1326, 417, 1336, 455, 1339, 480, 1337, 503],
  [1307, 560, 1260, 563, 1205, 570, 1160, 578, 1112, 590],
];
const GRID = (() => {
  let d = "";
  for (let x = 1262.6; x > 540; x -= 8.148) d += `M${x.toFixed(2)} 64V750`;
  for (let y = 749.6; y > 64; y -= 8.148) d += `M540 ${y.toFixed(2)}H1263`;
  return d;
})();

const Scene = () => (
  <svg width="1087" height="918" viewBox="540 64 1087 918">
    <path d={GRID} stroke="#a6a6a6" strokeOpacity=".52" fill="none" />
    {GHOST.map((g, i) => <path key={i} d={smooth(g)} fill="none" stroke="#4f8a3f" strokeOpacity=".5" strokeWidth=".8" />)}
    {TRACKS.map((g, i) => <path key={i} d={smooth(g)} fill="none" stroke="#4129b8" strokeWidth="1" strokeOpacity=".82" />)}
    <path d="M868 339L905 332 955 327 990 321" fill="none" stroke="#7a1cd0" strokeWidth="1.600" />
    <path d="M854 342h4M1255 262h4M1111 590h4M805 394h2M1150 576h2" stroke="#c01818" strokeWidth="2" />
    <path d="M1272 288v3M854 339v2" stroke="#22a022" strokeWidth="2" />
    {CLOUD.map(([c, d]) => <path key={c} d={d} fill={c} />)}
  </svg>
);

/* ---------- property tree data ---------- */
const BLUE = "#2474c4";
const ROWS = [
  { l: 0, f: "open", i: "gear", t: "Global Options" },
  { l: 1, t: "Fixed Frame", v: "map" },
  { l: 1, t: "Background Color", v: "100; 100; 100", swatch: true },
  { l: 1, t: "Frame Rate", v: "30" },
  { l: 1, t: "Default Light", c: true },
  { l: 0, f: "shut", i: "ok", t: "Global Status: Ok", k: "#000" },
  { l: 0, f: "shut", i: "grid", t: "Grid", k: BLUE, b: true, c: true },
  { l: 0, f: "shut", i: "warn", t: "TF", k: "#c07c0a", b: true, c: true },
  { l: 0, f: "shut", i: "robot", t: "RobotModel", k: BLUE, b: true, c: true },
  { l: 0, f: "shut", i: "cloud", t: "PointCloud2", k: "#000", c: false },
  { l: 0, f: "shut", i: "cloud", t: "PointCloud2", k: "#000", c: false },
  { l: 0, f: "open", i: "diamond", t: "Submaps", k: BLUE, b: true, c: true },
  { l: 1, f: "shut", i: "ok", t: "Status: Ok", k: "#000" },
  { l: 1, t: "Topic", v: "/submap_list" },
  { l: 1, t: "Unreliable", c: false },
  { l: 1, t: "Submap query service", v: "/submap_query" },
  { l: 1, t: "Tracking frame", v: "base_link" },
  { l: 1, t: "High Resolution", c: true },
  { l: 1, t: "Low Resolution", c: false },
  { l: 1, f: "shut", t: "Submaps" },
  { l: 1, t: "Fade-out distance", v: "1" },
  { l: 0, f: "open", i: "cloud", t: "PointCloud2", k: BLUE, b: true, c: true },
  { l: 1, f: "shut", i: "ok", t: "Status: Ok", k: "#000" },
  { l: 1, t: "Topic", v: "/scan_matched_points2" },
  { l: 1, t: "Unreliable", c: false },
  { l: 1, t: "Selectable", c: true },
  { l: 1, t: "Style", v: "Flat Squares" },
  { l: 1, t: "Size (m)", v: "0.2", sel: true },
  { l: 1, t: "Alpha", v: "1" },
  { l: 1, t: "Decay Time", v: "0" },
  { l: 1, t: "Position Transformer", v: "XYZ" },
  { l: 1, t: "Color Transformer", v: "AxisColor" },
  { l: 1, t: "Queue Size", v: "20" },
  { l: 1, t: "Axis", v: "Z" },
  { l: 1, f: "open", t: "Autocompute Value Bounds", c: false },
  { l: 2, t: "Min Value", v: "-10" },
  { l: 2, t: "Max Value", v: "10" },
  { l: 1, t: "Use Fixed Frame", c: true },
  { l: 0, f: "shut", i: "cubes", t: "Trajectories", k: BLUE, b: true, c: true },
  { l: 0, f: "shut", i: "cubes", t: "Landmark Poses", k: BLUE, b: true, c: true },
  { l: 0, f: "shut", i: "cubes", t: "Constraints", k: BLUE, b: true, c: true },
];
const Row = ({ r, col }) => (
  <RowBox $sel={r.sel} $col={col}>
    <NameCell $level={r.l} $color={r.k} $bold={r.b}>
      <Fold>{r.f === "open" ? <Down /> : r.f === "shut" ? <Tri /> : null}</Fold>
      {r.i && <RowIcon><Icon n={r.i} /></RowIcon>}
      <RowText>{r.t}</RowText>
    </NameCell>
    <ValueCell $sel={r.sel}>
      {r.swatch && <Swatch />}
      {r.v}
      {r.c !== undefined && <Check on={r.c} />}
    </ValueCell>
  </RowBox>
);
const VIEW_ROWS = [["Near Clip …", "0.01"], ["Target Fra…", "<Fixed Frame>"], ["Scale", "8.14799"], ["Angle", "0"], ["X", "28.1133"], ["Y", "-22.2094"]];
const TOOLS = [["hand", "Interact", 82, true], ["move", "Move Camera", 115], ["select", "Select", 74], ["focus", "Focus Camera", 116], ["ruler", "Measure", 87], ["arrow", "2D Pose Estimate", 137], ["arrow", "2D Nav Goal", 107], ["pin", "Publish Point", 118]];

export default function App() {
  return (
    <Desktop>
      <Global />
      <TopBar>
        <WindowTitle>demo_3d.rviz* - RViz</WindowTitle>
        <Indicators>
          <svg width="20" height="16" viewBox="0 0 20 16"><path d="M1 6q9-8 18 0M4 9.300q6-5.500 12 0M7 12.300q3-2.800 6 0" fill="none" stroke="#c9c5bc" strokeWidth="1.700" /><circle cx="10" cy="14" r="1.500" fill="#dfdbd2" /></svg>
          <Gap $w={12} /><Lang>En</Lang><Gap $w={11} />
          <svg width="10" height="16" viewBox="0 0 10 16"><path d="M1 4.500l7.500 7L5 15V1l3.500 3.500-7.500 7" fill="none" stroke="#dfdbd2" strokeWidth="1.400" /></svg>
          <Gap $w={13} />
          <svg width="25" height="14" viewBox="0 0 25 14"><rect x=".8" y="1.800" width="20.500" height="10.500" rx="1" fill="none" stroke="#dfdbd2" strokeWidth="1.400" /><path d="M22 4.500h2v5h-2" fill="none" stroke="#dfdbd2" strokeWidth="1.300" /><rect x="3" y="4" width="16" height="6" fill="#97948c" /><path d="M6 4.500l6 1 .5-2 5 6-6-1-1 2z" fill="#f2efe6" /></svg>
          <Gap $w={3} /><span>(97%)</span><Gap $w={12} />
          <svg width="17" height="14" viewBox="0 0 17 14"><path d="M0 4.500h3L7.500 1v12L3 9.500H0z" fill="#7c7a73" /><path d="M11 4.500l5 5M16 4.500l-5 5" stroke="#7c7a73" strokeWidth="1.800" /></svg>
          <Gap $w={19} /><span>5:47 PM</span><Gap $w={13} />
          <svg width="16" height="16" viewBox="0 0 16 16"><circle cx="8" cy="8" r="6.800" fill="none" stroke="#dfdbd2" strokeWidth="2" strokeDasharray="2.200 3.140" /><circle cx="8" cy="8" r="4.900" fill="none" stroke="#dfdbd2" strokeWidth="1.800" /><path d="M8 0v6" stroke="#484640" strokeWidth="4" /><path d="M8 1v7" stroke="#dfdbd2" strokeWidth="1.700" /></svg>
        </Indicators>
      </TopBar>
      <Body>
        <Launcher>
          {APPS.map(a => (
            <Slot key={a.k}>
              {a.m && <Marker width="6" height="14">{MARKS[a.m]}</Marker>}
              <Tile $bg={a.bg}><svg width="52" height="52" viewBox="0 0 52 52">{a.art}</svg></Tile>
              {a.active && <Marker $right width="6" height="14"><path d="M6 2.500L1 7l5 4.500z" fill="#ddd" /></Marker>}
            </Slot>
          ))}
          <TrashArt />
        </Launcher>
        <App_>
          <ToolBar>
            <Grip />
            {TOOLS.map(([i, t, w, on]) => <Tool key={t} $w={w} $on={on}><Icon n={i} />{t}</Tool>)}
            <ToolSep />
            <Icon n="plus" /><Gap $w={18} /><Icon n="minus" /><Gap $w={5} /><MenuCaret /><Gap $w={13} /><Icon n="eye" /><Gap $w={5} /><MenuCaret />
          </ToolBar>
          <Work>
            <Left>
              <PanelTitle><Icon n="monitor" /><span>Displays</span><Close /></PanelTitle>
              <TreeWrap>
                <Tree $col={263}>{ROWS.map((r, i) => <Row key={i} r={r} col={263} />)}</Tree>
                <Scroll><ScrollEnd><Caret up c="#999" /></ScrollEnd><Thumb><Bars /></Thumb><Push /><ScrollEnd><Caret /></ScrollEnd></Scroll>
              </TreeWrap>
              <Splitter><Bars $v /></Splitter>
              <Help><b>Size (m)</b>Point size in meters.</Help>
              <Buttons $pad="7px 3px 0"><Btn>Add</Btn><Btn $off>Duplicate</Btn><Btn $off>Remove</Btn><Btn $off>Rename</Btn></Buttons>
            </Left>
            <Handle $w={22} $l={11}><svg width="7" height="9"><path d="M6 1v7L1 4.500z" fill="#8a8a8a" stroke="#666" /></svg></Handle>
            <View><Scene /></View>
            <Handle $w={22} $l={6}><svg width="7" height="9"><path d="M1 1v7l5-3.500z" fill="#8a8a8a" stroke="#666" /></svg></Handle>
            <Right>
              <PanelTitle><Icon n="camera" /><span>Views</span><Close /></PanelTitle>
              <TypeRow><TypeLabel>Type:</TypeLabel><Select>TopDownOrtho<svg width="7" height="14"><path d="M.5 4.500h6L3.500 1.300zM.5 10.500h6l-3 3.200z" fill="#666" /></svg></Select><Btn>Zero</Btn></TypeRow>
              <ViewTree $col={134}>
                <CurrentRow><span><Down /></span><span>Current View</span><span>TopDownOrtho …</span></CurrentRow>
                {VIEW_ROWS.map(([t, v]) => <Row key={t} r={{ l: 1, t, v }} col={134} />)}
              </ViewTree>
              <Buttons $pad="7px 3px 0"><Btn>Save</Btn><Btn>Remove</Btn><Btn>Rename</Btn></Buttons>
            </Right>
          </Work>
          <TimeTitle><Icon n="clock" /><span>Time</span><Close /></TimeTitle>
          <TimeRow>
            <Label $w={77}>ROS Time:</Label><Field readOnly value="1573301843.60" />
            <Label $w={97}>ROS Elapsed:</Label><Field readOnly value="35.61" />
            <Label $w={78}>Wall Time:</Label><Field readOnly value="1573301843.63" />
            <Label $w={97}>Wall Elapsed:</Label><Field readOnly value="35.54" />
            <Push /><Check on={false} /><Gap $w={6} /><Label $w={91}>Experimental</Label>
          </TimeRow>
          <Status>
            <Cell $w="54px" $pl={2}><Btn $flat>Reset</Btn></Cell>
            <Cell />
            <Cell $w="45px" $pl={1} $top>31 fps</Cell>
          </Status>
        </App_>
      </Body>
    </Desktop>
  );
}
